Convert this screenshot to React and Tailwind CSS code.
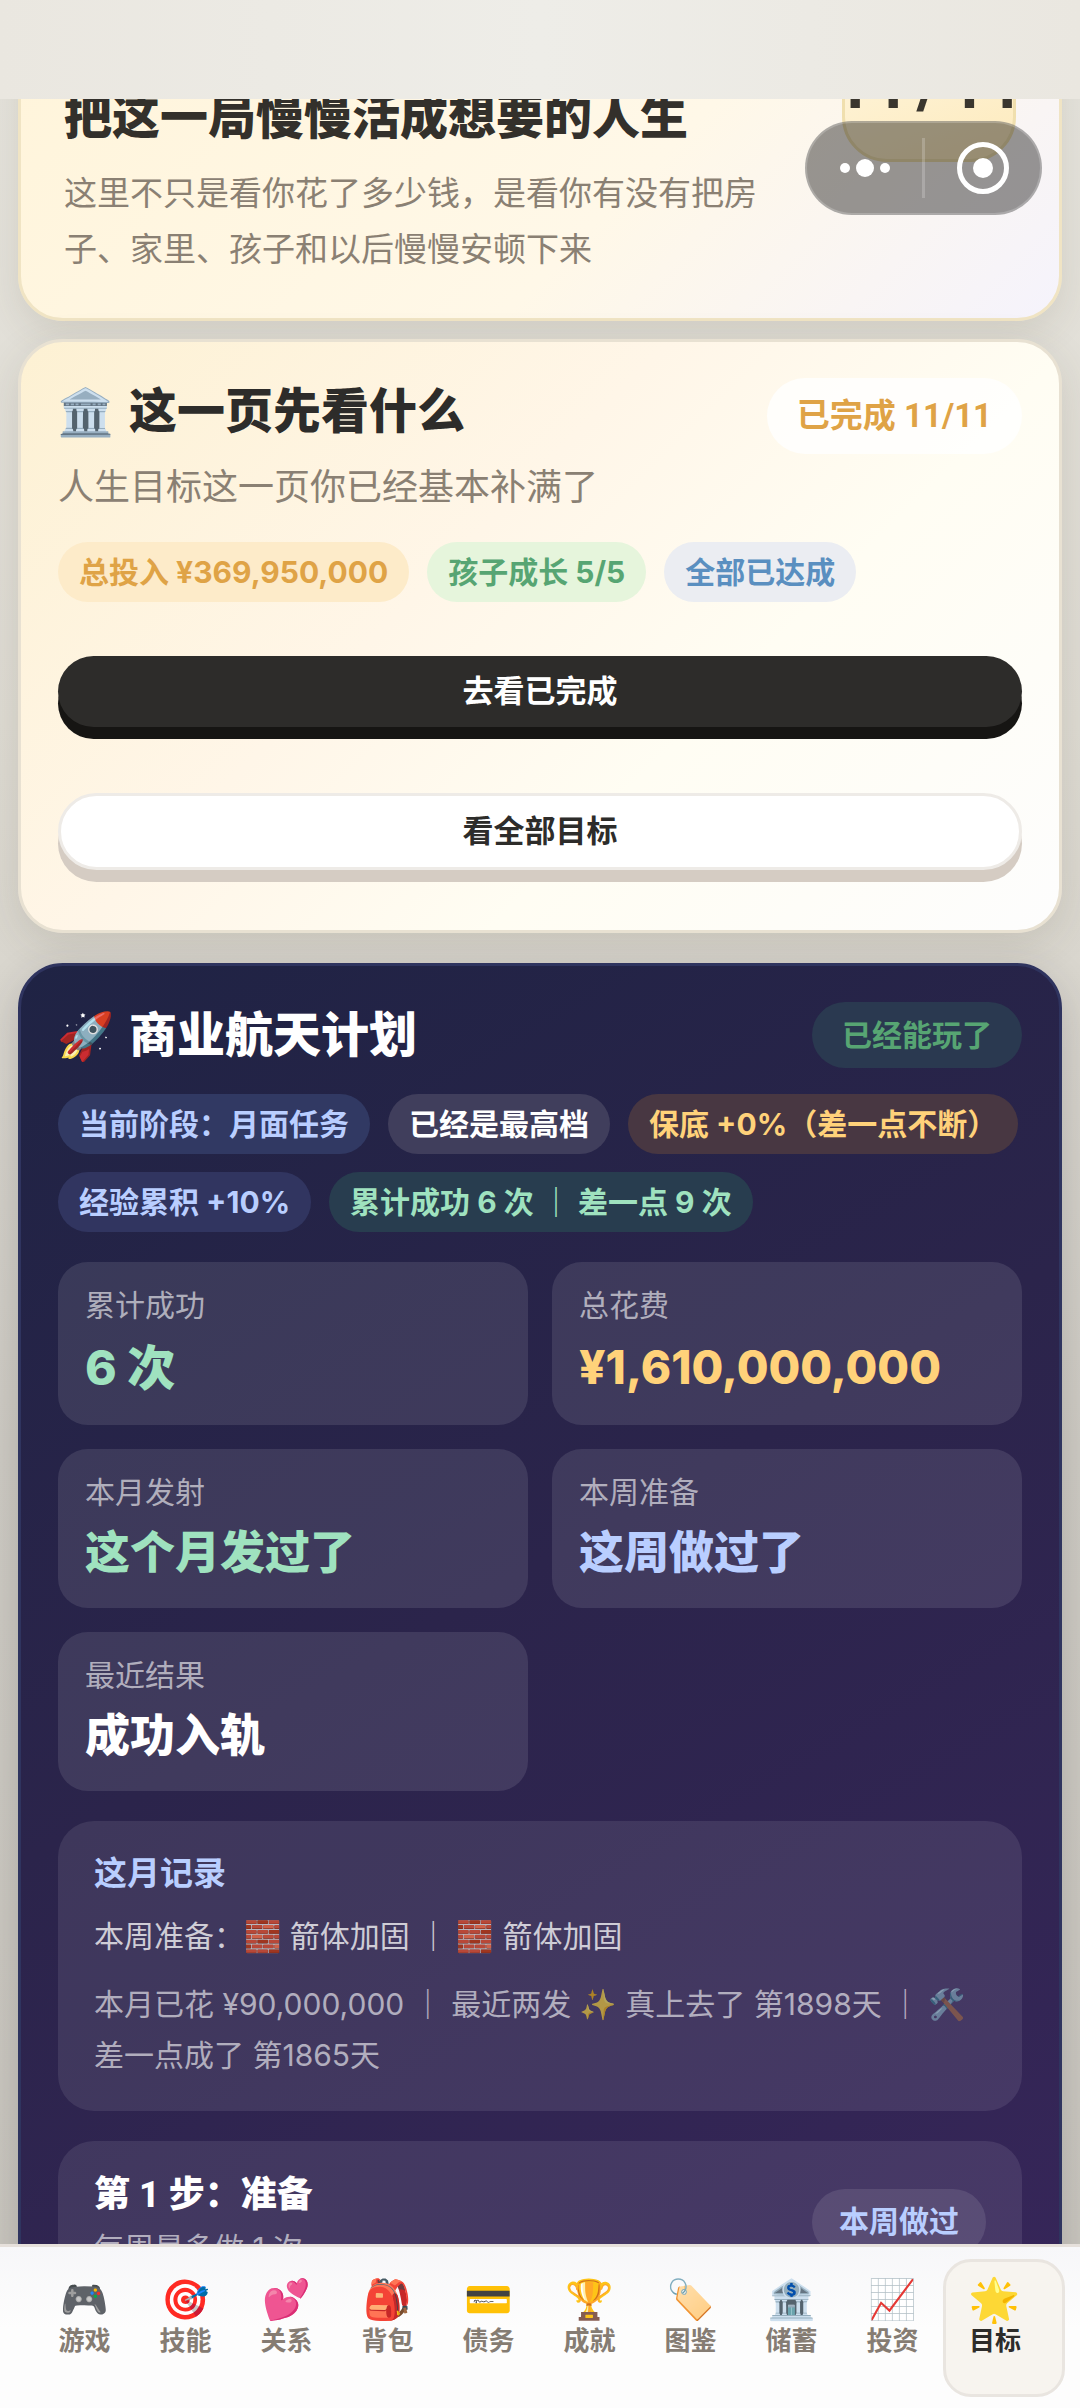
function Chip({ children, className }) {
  return (
    <span className={"flex h-[60px] items-center whitespace-nowrap rounded-full px-[21px] text-[30px] font-bold " + className}>
      {children}
    </span>
  );
}

function Heading({ emoji, children }) {
  return (
    <h2 className="flex h-[66px] items-center gap-[14px] text-[48px] font-extrabold leading-[60px]">
      <span className="flex w-[57px] justify-center text-[46px]">{emoji}</span>
      {children}
    </h2>
  );
}

function Stat({ label, value, className, size = "text-[45px] leading-[69px]" }) {
  return (
    <div className="rounded-[30px] bg-white/10 px-[27px] py-[21px]">
      <p className="text-[30px] leading-[45px] text-white/60">{label}</p>
      <p className={size + " mt-[3px] font-extrabold " + className}>{value}</p>
    </div>
  );
}

function TopCard() {
  return (
    <section className="-mt-[143px] flex items-start justify-between rounded-[45px] border-[3px] border-[#f0e4c4] bg-[linear-gradient(135deg,#fff4d9_0%,#fff8e8_60%,#f5f3fc_100%)] px-[43px] pb-[41px] pt-5 shadow-[0_12px_36px_rgba(80,70,50,0.12)]">
      <div className="w-[700px] pt-[108px]">
        <h1 className="whitespace-nowrap text-[48px] font-extrabold leading-[60px] text-[#33302b]">把这一局慢慢活成想要的人生</h1>
        <p className="mt-[18px] text-[33px] leading-[56px] text-[#8a8073]">
          这里不只是看你花了多少钱，是看你有没有把房子、家里、孩子和以后慢慢安顿下来
        </p>
      </div>
      <div className="flex h-[183px] w-[174px] items-end justify-center gap-[7px] whitespace-nowrap rounded-[45px] border-[3px] border-[#f0dfae] bg-[linear-gradient(160deg,#fff9e8,#fdeabc)] pb-[40px] font-[Roboto,sans-serif] text-[66px] font-bold leading-[66px] text-[#3a362e]">
        <span>11</span>
        <span>/</span>
        <span>11</span>
      </div>
    </section>
  );
}

function GuideCard() {
  return (
    <section className="mt-[18px] rounded-[45px] border-[3px] border-[#e8e1d2] bg-[linear-gradient(135deg,#fdf1d3_0%,#fff6e8_40%,#fffdf3_65%,#fdfdfd_100%)] px-[37px] pb-[60px] pt-[36px] shadow-[0_12px_42px_rgba(80,70,50,0.14)]">
      <div className="flex items-start justify-between text-[#2d2c2a]">
        <Heading emoji="🏛️">这一页先看什么</Heading>
        <span className='flex h-[76px] items-center rounded-full bg-white/80 px-[30px] font-["Roboto","Noto_Sans_CJK_SC",sans-serif] text-[33px] font-bold text-[#dfa346]'>
          已完成 11/11
        </span>
      </div>
      <p className="mt-[6px] text-[36px] leading-[54px] text-[#8a8073]">人生目标这一页你已经基本补满了</p>
      <div className="mt-[28px] flex flex-wrap gap-[18px]">
        <Chip className="bg-[#fdebc9] text-[#dfa346]">总投入 ¥369,950,000</Chip>
        <Chip className="bg-[#e6f5dc] text-[#57a573]">孩子成长 5/5</Chip>
        <Chip className="bg-[#ebedf2] text-[#5a8fc0]">全部已达成</Chip>
      </div>
      <button className="mt-[54px] block h-[71px] w-full rounded-[36px] bg-[#2d2c2a] text-[31px] font-bold text-white shadow-[0_12px_0_#161513]">去看已完成</button>
      <button className="mt-[66px] block h-[77px] w-full rounded-[39px] border-[3px] border-[#eeebe7] bg-white text-[31px] font-bold text-[#2d2c2a] shadow-[0_12px_0_#d5ccc3]">看全部目标</button>
    </section>
  );
}

function SpaceCard() {
  return (
    <section className="mt-[30px] rounded-[45px] border-[3px] border-[#2f345f] bg-[linear-gradient(150deg,#1f2344_0%,#2b244b_45%,#37265a_100%)] px-[37px] pb-[60px] pt-[36px] text-white shadow-[0_12px_42px_rgba(40,35,50,0.2)]">
      <div className="flex items-center justify-between">
        <Heading emoji="🚀">商业航天计划</Heading>
        <span className="flex h-[66px] items-center rounded-full bg-[#2a3950] px-[30px] text-[30px] font-bold text-[#57a573]">已经能玩了</span>
      </div>
      <div className="mt-[26px] flex flex-wrap gap-[18px]">
        <Chip className="bg-[#313963] text-[#b9ceff]">当前阶段：月面任务</Chip>
        <Chip className="bg-[#403e5c] text-white">已经是最高档</Chip>
        <Chip className="bg-[#483742] text-[#ffd27a]">保底 +0%（差一点不断）</Chip>
        <Chip className="bg-[#313560] text-[#b9ceff]">经验累积 +10%</Chip>
        <Chip className="bg-[#283d4f] text-[#9fe2bf]">累计成功 6 次 ｜ 差一点 9 次</Chip>
      </div>
      <div className="mt-[30px] grid grid-cols-2 gap-6">
        <Stat label="累计成功" value="6 次" className="text-[#9fe2bf]" size="text-[48px] leading-[73px]" />
        <Stat label="总花费" value="¥1,610,000,000" className="text-[#ffd27a]" size="text-[46px] leading-[73px]" />
        <Stat label="本月发射" value="这个月发过了" className="text-[#9fe2bf]" />
        <Stat label="本周准备" value="这周做过了" className="text-[#b9ceff]" />
        <Stat label="最近结果" value="成功入轨" className="text-white" />
      </div>
      <div className="mt-[30px] rounded-[36px] bg-white/9 px-9 py-[30px]">
        <h3 className="text-[33px] font-bold leading-[45px] text-[#b9ceff]">这月记录</h3>
        <p className="mt-[15px] text-[30px] leading-[51px] text-white/75">本周准备：🧱 箭体加固 ｜ 🧱 箭体加固</p>
        <p className="mt-[17px] text-[30px] leading-[51px] text-white/60">
          本月已花 ¥90,000,000 ｜ 最近两发 ✨ 真上去了 第1898天 ｜ 🛠️ 差一点成了 第1865天
        </p>
      </div>
      <div className="mt-[30px] flex items-center justify-between rounded-[36px] bg-white/9 px-9 py-[30px]">
        <div>
          <h3 className='font-["Roboto","Noto_Sans_CJK_SC",sans-serif] text-[36px] font-extrabold leading-[48px]'>第 1 步：准备</h3>
          <p className="mt-[5px] text-[30px] leading-[48px] text-white/60">每周最多做 1 次</p>
        </div>
        <span className="flex h-[66px] items-center rounded-full bg-white/10 px-[27px] text-[30px] font-bold text-[#b9ceff]">本周做过</span>
      </div>
    </section>
  );
}

const TABS = [
  ["🎮", "游戏"],
  ["🎯", "技能"],
  ["💕", "关系"],
  ["🎒", "背包"],
  ["💳", "债务"],
  ["🏆", "成就"],
  ["🏷️", "图鉴"],
  ["🏦", "储蓄"],
  ["📈", "投资"],
];

function TabBar() {
  return (
    <nav className="relative grid h-[164px] shrink-0 grid-cols-[repeat(9,101fr)_122fr] border-t-[3px] border-[#e6e0db] bg-[linear-gradient(180deg,#f7f7f9,#fdfdfd_50%)] pb-[11px] pl-[34px] pr-[15px] pt-[12px]">
      {TABS.map(([emoji, label]) => (
        <button key={label} className="flex flex-col items-center whitespace-nowrap pt-[15px] font-bold text-[#857c73]">
          <span className="text-[39px] leading-[50px]">{emoji}</span>
          <span className="text-[26px] leading-[34px]">{label}</span>
        </button>
      ))}
      <button aria-current="page" className="flex flex-col items-center whitespace-nowrap rounded-[28px] border-[3px] border-[#e9e5e0] bg-[#f7f4ef] pr-[18px] pt-[12px] font-bold text-[#2d2c2a]">
        <span className="text-[42px] leading-[50px]">🌟</span>
        <span className="text-[26px] leading-[34px]">目标</span>
      </button>
    </nav>
  );
}

function Capsule() {
  return (
    <div className="absolute right-[38px] top-[121px] flex h-[94px] w-[237px] items-center rounded-full border-2 border-white/20 bg-black/40">
      <button aria-label="更多" className="flex flex-1 items-center justify-center gap-[6px]">
        <span className="size-[10px] rounded-full bg-white" />
        <span className="size-[18px] rounded-full bg-white" />
        <span className="size-[10px] rounded-full bg-white" />
      </button>
      <span className="h-[60px] w-[3px] bg-white/20" />
      <button aria-label="关闭" className="flex flex-1 items-center justify-center">
        <span className="flex size-[52px] items-center justify-center rounded-full border-[5px] border-white">
          <span className="size-[20px] rounded-full bg-white" />
        </span>
      </button>
    </div>
  );
}

export default function App() {
  return (
    <div className='relative flex h-screen flex-col overflow-hidden bg-[linear-gradient(180deg,#e6e4dd_0%,#dedbd3_30%,#cfccc4_60%,#c9c6be_100%)] font-["Inter","Noto_Sans_CJK_SC","Noto_Color_Emoji",sans-serif]'>
      <header className="h-[99px] shrink-0 bg-[linear-gradient(90deg,#eae7e0,#eeede8_50%,#eae7e0)]" />
      <main className="flex min-h-0 flex-1 flex-col overflow-hidden px-[18px] [&>section]:shrink-0">
        <TopCard />
        <GuideCard />
        <SpaceCard />
      </main>
      <TabBar />
      <Capsule />
    </div>
  );
}
